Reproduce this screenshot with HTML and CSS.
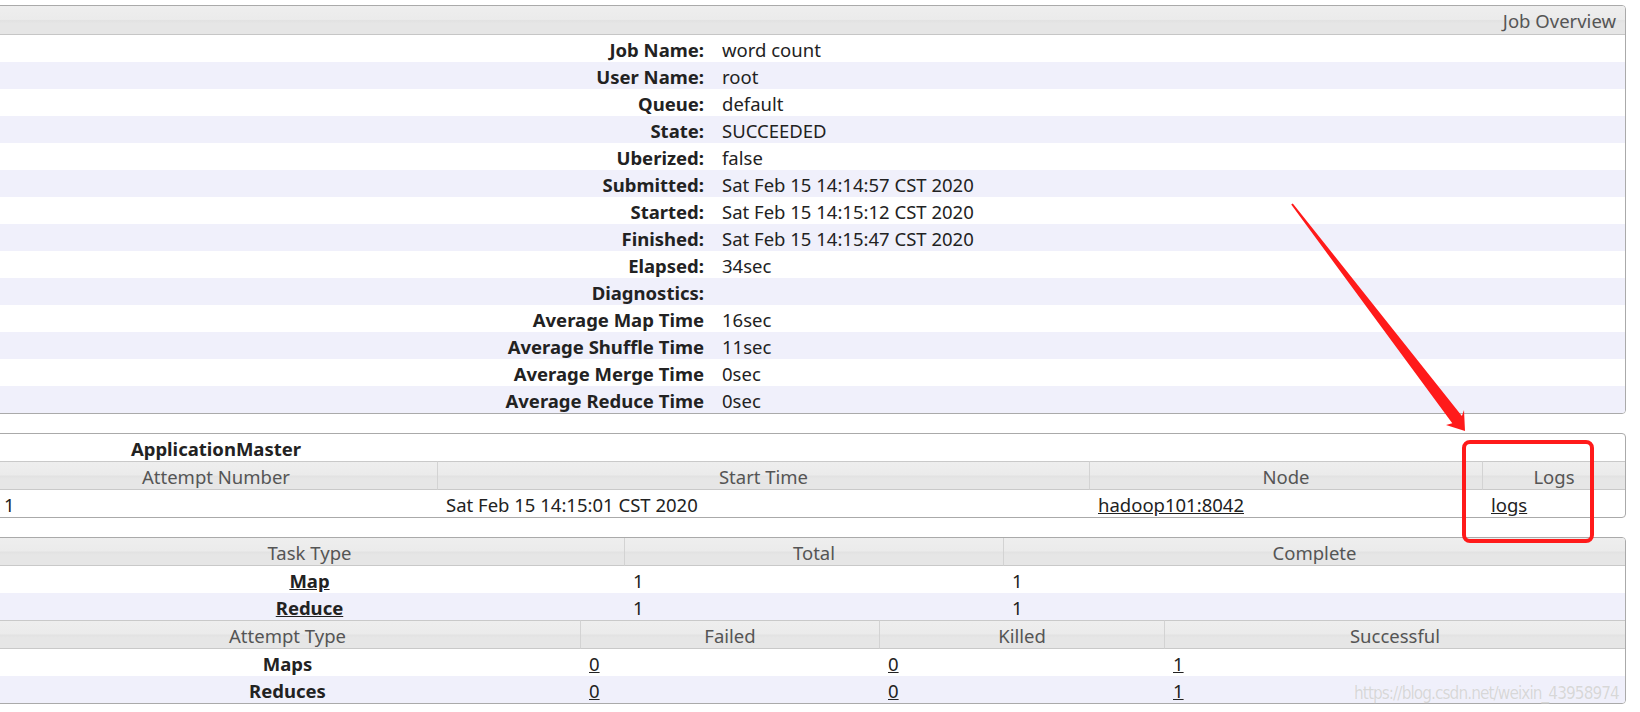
FILE: index.html
```html
<!DOCTYPE html>
<html lang="en">
<head>
<meta charset="utf-8">
<title>Job Overview</title>
<link rel="stylesheet" href="styles.css">
</head>
<body>
<div class="page">
  <div class="box">
    <table class="info">
      <colgroup><col class="c-label"><col></colgroup>
      <thead>
        <tr><th colspan="2" class="caption">Job Overview</th></tr>
      </thead>
      <tbody>
        <tr><th>Job Name:</th><td>word count</td></tr>
        <tr class="odd"><th>User Name:</th><td>root</td></tr>
        <tr><th>Queue:</th><td>default</td></tr>
        <tr class="odd"><th>State:</th><td>SUCCEEDED</td></tr>
        <tr><th>Uberized:</th><td>false</td></tr>
        <tr class="odd"><th>Submitted:</th><td>Sat Feb 15 14:14:57 CST 2020</td></tr>
        <tr><th>Started:</th><td>Sat Feb 15 14:15:12 CST 2020</td></tr>
        <tr class="odd"><th>Finished:</th><td>Sat Feb 15 14:15:47 CST 2020</td></tr>
        <tr><th>Elapsed:</th><td>34sec</td></tr>
        <tr class="odd"><th>Diagnostics:</th><td></td></tr>
        <tr><th>Average Map Time</th><td>16sec</td></tr>
        <tr class="odd"><th>Average Shuffle Time</th><td>11sec</td></tr>
        <tr><th>Average Merge Time</th><td>0sec</td></tr>
        <tr class="odd"><th>Average Reduce Time</th><td>0sec</td></tr>
      </tbody>
    </table>
  </div>

  <div class="box">
    <table class="grid">
      <colgroup><col class="am1"><col class="am2"><col class="am3"><col class="am4"></colgroup>
      <tr class="title"><th class="strong">ApplicationMaster</th><td colspan="3"></td></tr>
      <tr class="head head-top"><th>Attempt Number</th><th>Start Time</th><th>Node</th><th>Logs</th></tr>
      <tr><td>1</td><td>Sat Feb 15 14:15:01 CST 2020</td><td><a href="#">hadoop101:8042</a></td><td><a href="#">logs</a></td></tr>
    </table>
  </div>

  <div class="box">
    <table class="grid">
      <colgroup><col class="t1"><col class="t2"><col class="t3"></colgroup>
      <tr class="head"><th>Task Type</th><th>Total</th><th>Complete</th></tr>
      <tr><th class="strong"><a href="#">Map</a></th><td>1</td><td>1</td></tr>
      <tr class="odd"><th class="strong"><a href="#">Reduce</a></th><td>1</td><td>1</td></tr>
    </table>
    <table class="grid">
      <colgroup><col class="a1"><col class="a2"><col class="a3"><col class="a4"></colgroup>
      <tr class="head head-top"><th>Attempt Type</th><th>Failed</th><th>Killed</th><th>Successful</th></tr>
      <tr><th class="strong">Maps</th><td><a href="#">0</a></td><td><a href="#">0</a></td><td><a href="#">1</a></td></tr>
      <tr class="odd"><th class="strong">Reduces</th><td><a href="#">0</a></td><td><a href="#">0</a></td><td><a href="#">1</a></td></tr>
    </table>
  </div>
</div>

<svg class="annot" width="1640" height="712" viewBox="0 0 1640 712" xmlns="http://www.w3.org/2000/svg">
  <polygon points="1291.2,204.6 1452.3,423.3 1446,425 1465,431 1464,410 1461.9,416.1 1292.8,203.4" fill="#ff1a1a"/>
  <rect x="1464" y="442" width="128" height="99" rx="6" ry="6" fill="none" stroke="#ff1a1a" stroke-width="4"/>
</svg>

<div class="watermark">https://blog.csdn.net/weixin_43958974</div>
</body>
</html>
```

FILE: styles.css
```css
* { box-sizing: border-box; }

html, body {
  margin: 0;
  background: #fff;
}

body {
  padding-top: 5px;
  font-family: "Noto Sans", "Open Sans", sans-serif;
  font-size: 18.5px;
  color: #222;
  overflow: hidden;
  width: 1640px;
  height: 712px;
  position: relative;
}

.page {
  margin-left: -6px;
  width: 1632px;
  display: flex;
  flex-direction: column;
  gap: 19px;
}

.box {
  border: 1px solid #aaa;
  border-radius: 4px;
  overflow: hidden;
  background: #fff;
}

table {
  width: 100%;
  table-layout: fixed;
  border-collapse: separate;
  border-spacing: 0;
}

th, td {
  padding: 2px 0 0;
  line-height: 25px;
  white-space: nowrap;
  vertical-align: middle;
  overflow: hidden;
}

a { color: #222; text-decoration: underline; }

.odd, .info tbody tr:nth-child(even) { background: #f0f0fb; }

/* Overview */
.c-label { width: 718px; }
.info th {
  text-align: right;
  font-weight: bold;
  padding-right: 9px;
}
.info td { padding-left: 9px; text-align: left; }
.info thead th.caption {
  font-weight: normal;
  color: #555;
  line-height: 26px;
  padding-right: 9px;
  border-bottom: 1px solid #c6c6c6;
}

.caption, .head th {
  background: linear-gradient(to bottom, #eeeeee 0%, #ebebeb 48%, #e2e2e2 52%, #e6e6e6 62%, #e6e6e6 100%);
}

/* Grid tables */
.grid td { padding-left: 9px; padding-right: 9px; text-align: left; }
.grid th {
  text-align: center;
  font-weight: normal;
}
.grid th.strong { font-weight: bold; }
.head th {
  color: #555;
  border-bottom: 1px solid #c9c9c9;
}
.head th + th { border-left: 1px solid #d3d3d3; }
.head-top th { border-top: 1px solid #c9c9c9; }

.am1 { width: 442px; }
.am2 { width: 652px; }
.am3 { width: 393px; }
.am4 { width: 143px; }

.t1 { width: 629px; }
.t2 { width: 379px; }
.t3 { width: 622px; }

.a1 { width: 585px; }
.a2 { width: 299px; }
.a3 { width: 285px; }
.a4 { width: 461px; }

/* Annotations layered over the page */
.annot {
  position: absolute;
  left: 0;
  top: 0;
  pointer-events: none;
}

.watermark {
  position: absolute;
  left: 1354px;
  top: 683px;
  font-family: "DejaVu Sans Condensed", "Liberation Sans Narrow", "Liberation Sans", sans-serif;
  font-size: 17px;
  letter-spacing: -0.9px;
  color: rgba(200, 200, 200, 0.7);
  text-shadow: 0 0 1px rgba(255, 255, 255, 0.8);
  white-space: nowrap;
  pointer-events: none;
}
```
